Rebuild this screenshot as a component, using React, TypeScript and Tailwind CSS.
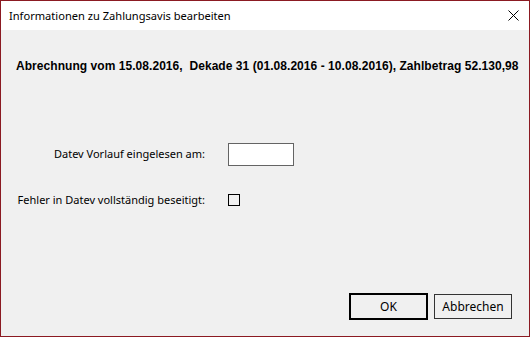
export default function App() {
  return (
    <div className="flex h-[337px] w-[530px] flex-col border border-[#8b1a22] bg-[#f0f0f0] font-['Noto_Sans',sans-serif] text-black">
      {/* title bar */}
      <div className="flex h-[29px] items-center justify-between bg-white pl-[8px] pr-[8px]">
        <span className="text-[11.1px] leading-none">Informationen zu Zahlungsavis bearbeiten</span>
        <svg width="11" height="11" viewBox="0 0 11 11" className="mr-[2px]">
          <path d="M0.5 0.5 L10.5 10.5 M10.5 0.5 L0.5 10.5" stroke="#000" strokeWidth="1" />
        </svg>
      </div>

      <div className="flex flex-1 flex-col">
        <div className="mt-[29px] pl-[15px] font-['Liberation_Sans',sans-serif] text-[12px] font-bold leading-[14px] tracking-[0.05px] whitespace-pre">
          {"Abrechnung vom 15.08.2016,  Dekade 31 (01.08.2016 - 10.08.2016), Zahlbetrag 52.130,98"}
        </div>

        <div className="mt-[70px] grid grid-cols-[189px_auto] items-center gap-x-[23px] pl-[15px] text-[11px]">
          <label className="text-right">Datev Vorlauf eingelesen am:</label>
          <input className="h-[23px] w-[66px] border border-[#646464] bg-white outline-none" />
          <label className="mt-[26px] text-right">Fehler in Datev vollständig beseitigt:</label>
          <span className="mt-[26px] block h-[12px] w-[12px] border border-black bg-[#f0f0f0]" />
        </div>

        <div className="mt-auto flex items-center justify-end gap-[6px] pb-[16px] pr-[17px] text-[12px]">
          <button className="h-[27px] w-[79px] border-2 border-black bg-[#f0f0f0]">OK</button>
          <button className="h-[25px] w-[78px] border border-[#333] bg-[#f0f0f0]">Abbrechen</button>
        </div>
      </div>
    </div>
  );
}
